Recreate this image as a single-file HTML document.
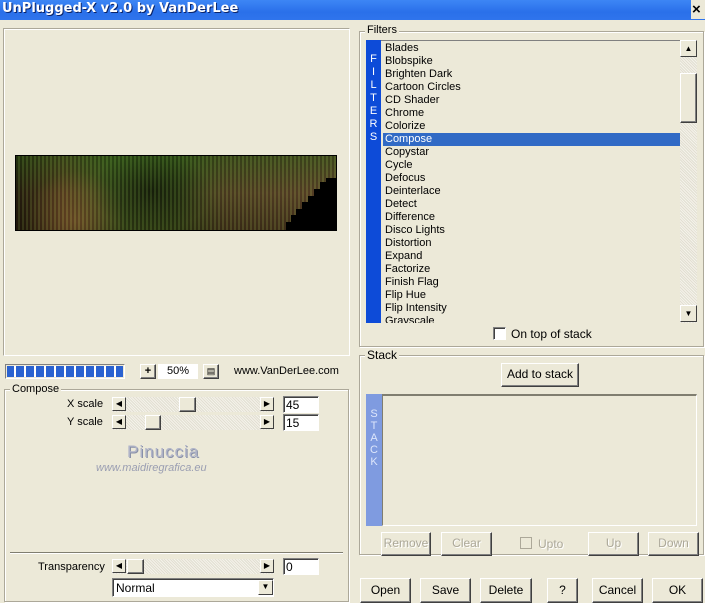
<!DOCTYPE html>
<html><head><style>
*{box-sizing:border-box}
body{margin:0;width:705px;height:603px;background:#ece9d8;font-family:"Liberation Sans",sans-serif;font-size:11px;color:#000;position:relative;overflow:hidden}
.a{position:absolute}
.grp{position:absolute;border:1px solid #aca899;box-shadow:1px 1px 0 #fff inset,1px 1px 0 #fff}
.lbl{position:absolute;background:#ece9d8;padding:0 2px;font-size:11px}
.btn{position:absolute;background:#ece9d8;border:1px solid;border-color:#fff #404040 #404040 #fff;box-shadow:inset -1px -1px 0 #808080;text-align:center;font-size:12px}
.dis{color:#aca899;text-shadow:1px 1px 0 #fff}
.sunk{position:absolute;background:#fff;border:1px solid;border-color:#808080 #fff #fff #808080;box-shadow:inset 1px 1px 0 #404040}
.sb{position:absolute;width:14px;height:14px;background:#ece9d8;border:1px solid;border-color:#fff #404040 #404040 #fff;font-size:8px;text-align:center;line-height:12px}
.trk{position:absolute;background:repeating-linear-gradient(45deg,#f4f2ea 0 1px,#e2dfd2 1px 2px)}
.item{height:13px;line-height:13px;padding-left:4px;font-size:11px}
</style></head><body>
<div class="a" style="left:0;top:0;width:705px;height:20px;background:linear-gradient(#3d86f5,#2a70ea 60%,#2f74ec)"></div>
<div class="a" style="left:2px;top:1px;color:#fff;font-weight:bold;font-size:13px;font-family:'DejaVu Sans',sans-serif;text-shadow:1px 1px #0a246a">UnPlugged-X v2.0 by VanDerLee</div>
<div class="a" style="left:691px;top:0;width:14px;height:19px;background:#ece9d8;font-weight:bold;font-size:15px;line-height:19px;padding-left:1px">×</div>

<!-- preview -->
<div class="a" style="left:3px;top:28px;width:347px;height:328px;border:1px solid;border-color:#aca899 #fff #fff #aca899;box-shadow:inset 1px 1px 0 #fff"></div>
<div class="a" style="left:15px;top:155px;width:322px;height:76px;border:1px solid #000;overflow:hidden;background:radial-gradient(ellipse 60px 40px at 135px 35px,rgba(0,0,0,.55),transparent),radial-gradient(ellipse 50px 50px at 60px 65px,rgba(170,110,60,.5),transparent),linear-gradient(180deg,rgba(40,90,20,.5),transparent 50%,rgba(20,10,0,.3)),linear-gradient(90deg,#2a2010,#5a4020 15%,#40561e 30%,#3a4c1a 50%,#5a4626 65%,#6a4c2e 100%);">
<div style="position:absolute;inset:0;background:repeating-linear-gradient(90deg,rgba(0,0,0,.2) 0 2px,rgba(100,140,60,.2) 2px 4px)"></div>
<svg class="a" style="right:0;bottom:0" width="50" height="52"><polygon points="50,0 50,52 0,52 0,44 5,44 5,37 10,37 10,31 16,31 16,24 22,24 22,18 28,18 28,11 34,11 34,4 40,4 40,0" fill="#000"/></svg></div>

<!-- progress -->
<div class="a" style="left:5px;top:364px;width:120px;height:15px;border:1px solid;border-color:#808080 #fff #fff #808080;background:repeating-linear-gradient(90deg,#2a62d0 0 8px,#fff 8px 10px);background-clip:content-box;padding:1px"></div>
<div class="btn" style="left:140px;top:364px;width:16px;height:15px;font-size:11px;line-height:12px;font-weight:bold">+</div>
<div class="a" style="left:158px;top:364px;width:40px;height:15px;background:#fff;text-align:center;line-height:15px">50%</div>
<div class="btn" style="left:203px;top:364px;width:16px;height:15px;font-size:9px;line-height:12px">▤</div>
<div class="a" style="left:234px;top:365px;font-size:11px">www.VanDerLee.com</div>

<!-- compose -->
<div class="grp" style="left:4px;top:389px;width:345px;height:213px"></div>
<div class="lbl" style="left:10px;top:383px">Compose</div>
<div class="a" style="left:67px;top:398px;font-size:11px">X scale</div>
<div class="a" style="left:67px;top:416px;font-size:11px">Y scale</div>
<div class="trk" style="left:112px;top:397px;width:162px;height:15px"></div>
<div class="sb" style="left:112px;top:397px">◀</div><div class="sb" style="left:260px;top:397px">▶</div>
<div class="btn" style="left:179px;top:397px;width:17px;height:15px"></div>
<div class="trk" style="left:112px;top:415px;width:162px;height:15px"></div>
<div class="sb" style="left:112px;top:415px">◀</div><div class="sb" style="left:260px;top:415px">▶</div>
<div class="btn" style="left:145px;top:415px;width:16px;height:15px"></div>
<div class="sunk" style="left:283px;top:396px;width:36px;height:17px;padding:1px 2px;font-size:12px">45</div>
<div class="sunk" style="left:283px;top:414px;width:36px;height:17px;padding:1px 2px;font-size:12px">15</div>
<div class="a" style="left:127px;top:442px;font-size:17px;color:#b0b4c8;letter-spacing:1px;text-shadow:1px 1px #8890a8">Pinuccia</div>
<div class="a" style="left:96px;top:462px;font-size:11px;color:#9a9eb2;font-style:italic">www.maidiregrafica.eu</div>
<div class="a" style="left:10px;top:552px;width:333px;height:2px;background:#807e70;border-bottom:1px solid #fff"></div>
<div class="a" style="left:38px;top:561px;font-size:11px">Transparency</div>
<div class="trk" style="left:112px;top:559px;width:162px;height:15px"></div>
<div class="sb" style="left:112px;top:559px">◀</div><div class="sb" style="left:260px;top:559px">▶</div>
<div class="btn" style="left:127px;top:559px;width:17px;height:15px"></div>
<div class="sunk" style="left:283px;top:558px;width:36px;height:17px;padding:1px 2px;font-size:12px">0</div>
<div class="sunk" style="left:112px;top:578px;width:162px;height:19px;padding:2px 3px;font-size:12px">Normal</div>
<div class="sb" style="left:258px;top:580px;width:15px;height:15px">▼</div>

<!-- filters -->
<div class="grp" style="left:359px;top:31px;width:345px;height:316px"></div>
<div class="lbl" style="left:365px;top:24px">Filters</div>
<div class="a" style="left:366px;top:40px;width:15px;height:283px;background:#0d4bd8;color:#fff;text-align:center;font-size:11px;line-height:13px;padding-top:13px">F<br>I<br>L<br>T<br>E<br>R<br>S</div>
<div class="a" style="left:381px;top:40px;width:300px;height:283px;overflow:hidden;border-top:1px solid #808080;padding-top:1px">
<div class="item">Blades</div><div class="item">Blobspike</div><div class="item">Brighten Dark</div><div class="item">Cartoon Circles</div><div class="item">CD Shader</div><div class="item">Chrome</div><div class="item">Colorize</div>
<div class="item" style="background:#316ac5;color:#fff;margin-left:2px;padding-left:2px">Compose</div>
<div class="item">Copystar</div><div class="item">Cycle</div><div class="item">Defocus</div><div class="item">Deinterlace</div><div class="item">Detect</div><div class="item">Difference</div><div class="item">Disco Lights</div><div class="item">Distortion</div><div class="item">Expand</div><div class="item">Factorize</div><div class="item">Finish Flag</div><div class="item">Flip Hue</div><div class="item">Flip Intensity</div><div class="item">Grayscale</div></div>
<div class="trk" style="left:680px;top:40px;width:17px;height:283px"></div>
<div class="sb" style="left:680px;top:40px;width:17px;height:17px;line-height:15px">▲</div>
<div class="btn" style="left:680px;top:73px;width:17px;height:50px"></div>
<div class="sb" style="left:680px;top:305px;width:17px;height:17px;line-height:15px">▼</div>
<div class="sunk" style="left:493px;top:327px;width:13px;height:13px"></div>
<div class="a" style="left:511px;top:327px;font-size:12px">On top of stack</div>

<!-- stack -->
<div class="grp" style="left:359px;top:355px;width:345px;height:200px"></div>
<div class="lbl" style="left:365px;top:348px;font-size:12px">Stack</div>
<div class="btn" style="left:501px;top:363px;width:78px;height:24px;line-height:21px">Add to stack</div>
<div class="a" style="left:366px;top:394px;width:16px;height:132px;background:#7f9be0;color:#dde6fb;text-align:center;font-size:11px;line-height:12px;padding-top:14px">S<br>T<br>A<br>C<br>K</div>
<div class="a" style="left:382px;top:394px;width:315px;height:132px;border-top:2px solid #807e70;border-bottom:1px solid #fff;border-right:1px solid #fff;border-left:1px solid #807e70"></div>
<div class="btn dis" style="left:381px;top:532px;width:50px;height:24px;line-height:21px">Remove</div>
<div class="btn dis" style="left:441px;top:532px;width:51px;height:24px;line-height:21px">Clear</div>
<div class="a" style="left:520px;top:537px;width:12px;height:12px;border:1px solid #aca899"></div>
<div class="a dis" style="left:538px;top:537px;font-size:12px">Upto</div>
<div class="btn dis" style="left:588px;top:532px;width:51px;height:24px;line-height:21px">Up</div>
<div class="btn dis" style="left:648px;top:532px;width:51px;height:24px;line-height:21px">Down</div>

<div class="btn" style="left:360px;top:578px;width:51px;height:25px;line-height:22px">Open</div>
<div class="btn" style="left:420px;top:578px;width:51px;height:25px;line-height:22px">Save</div>
<div class="btn" style="left:480px;top:578px;width:52px;height:25px;line-height:22px">Delete</div>
<div class="btn" style="left:547px;top:578px;width:31px;height:25px;line-height:22px">?</div>
<div class="btn" style="left:592px;top:578px;width:51px;height:25px;line-height:22px">Cancel</div>
<div class="btn" style="left:652px;top:578px;width:51px;height:25px;line-height:22px">OK</div>
</body></html>
